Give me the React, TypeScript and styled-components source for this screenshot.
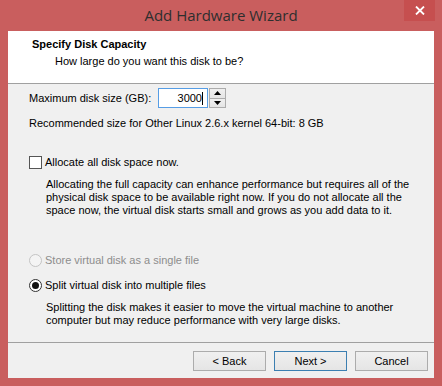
import React from "react";
import styled, { createGlobalStyle } from "styled-components";

const Global = createGlobalStyle`
  html, body { margin: 0; padding: 0; background: #c95e5e; }
  * { box-sizing: border-box; }
`;

const Window = styled.div`
  width: 442px;
  height: 386px;
  background: #c95e5e;
  padding: 0 8px 8px 8px;
  display: flex;
  flex-direction: column;
  font-family: "Liberation Sans", Arial, sans-serif;
  font-size: 11px;
  color: #000;
`;

const TitleBar = styled.div`
  height: 31px;
  display: grid;
  grid-template-columns: 1fr auto 1fr;
  align-items: start;
  margin: 0 -8px;
`;

const TitleText = styled.div`
  grid-column: 2;
  font-family: "Open Sans", "Noto Sans", sans-serif;
  font-size: 15px;
  line-height: 30px;
  color: #2e2e2e;
`;

const CloseButton = styled.div`
  grid-column: 3;
  justify-self: end;
  margin-right: 7px;
  width: 31px;
  height: 21px;
  background: #c64f4f;
  display: flex;
  align-items: center;
  justify-content: center;
`;

const Client = styled.div`
  flex: 1;
  background: #f0f0f0;
  display: flex;
  flex-direction: column;
`;

const Header = styled.div`
  height: 53px;
  background: #fff;
  border-bottom: 1px solid #a0a0a0;
  padding: 7px 0 0 24px;
`;

const HeaderTitle = styled.div`
  font-weight: bold;
  line-height: 13px;
`;

const HeaderSub = styled.div`
  margin: 4px 0 0 23px;
  line-height: 13px;
`;

const Body = styled.div`
  flex: 1;
  padding: 4px 0 0 21px;
  display: flex;
  flex-direction: column;
  line-height: 13px;
`;

const SizeRow = styled.div`
  display: flex;
  align-items: center;
  height: 20px;
`;

const SizeLabel = styled.div`
  width: 129px;
`;

const SizeInput = styled.div`
  width: 50px;
  height: 20px;
  border: 1px solid #569de5;
  background: #fff;
  display: flex;
  align-items: center;
  justify-content: flex-end;
  padding-right: 4px;
`;

const Caret = styled.span`
  display: inline-block;
  width: 1px;
  height: 13px;
  background: #000;
`;

const Spin = styled.div`
  display: flex;
  flex-direction: column;
  width: 17px;
  height: 20px;
  margin-left: 1px;
`;

const SpinButton = styled.div`
  flex: 1;
  border: 1px solid #acacac;
  background: linear-gradient(#f0f0f0, #e5e5e5);
  display: flex;
  align-items: center;
  justify-content: center;
  & + & { border-top: none; }
`;

const Text = styled.div<{ $top: number; $indent?: number; $disabled?: boolean }>`
  margin-top: ${(p) => p.$top}px;
  margin-left: ${(p) => p.$indent ?? 0}px;
  color: ${(p) => (p.$disabled ? "#8d8d8d" : "#000")};
  line-height: 13px;
`;

const OptionRow = styled.label<{ $top: number; $disabled?: boolean }>`
  display: flex;
  align-items: center;
  gap: 3px;
  margin-top: ${(p) => p.$top}px;
  color: ${(p) => (p.$disabled ? "#8d8d8d" : "#000")};
  line-height: 13px;
`;

const CheckBox = styled.span`
  width: 13px;
  height: 13px;
  border: 1px solid #555;
  background: #fff;
`;

const Radio = styled.span<{ $checked?: boolean; $disabled?: boolean }>`
  width: 13px;
  height: 13px;
  border-radius: 50%;
  border: 1px solid ${(p) => (p.$disabled ? "#c4c4c4" : "#333")};
  background: ${(p) => (p.$disabled ? "#f4f4f4" : "#fff")};
  display: flex;
  align-items: center;
  justify-content: center;
  &::after {
    content: "";
    display: ${(p) => (p.$checked ? "block" : "none")};
    width: 7px;
    height: 7px;
    border-radius: 50%;
    background: #111;
  }
`;

const Footer = styled.div`
  border-top: 1px solid #a0a0a0;
  height: 36px;
  display: flex;
  justify-content: flex-end;
  align-items: flex-start;
  gap: 8px;
  padding: 8px 6px 0 0;
`;

const Button = styled.div<{ $default?: boolean }>`
  width: 73px;
  height: 20px;
  border: 1px solid ${(p) => (p.$default ? "#3c7fb1" : "#acacac")};
  background: linear-gradient(#f0f0f0, #e5e5e5);
  display: flex;
  align-items: center;
  justify-content: center;
  line-height: 13px;
`;

export default function App() {
  return (
    <>
      <Global />
      <Window>
        <TitleBar>
          <TitleText>Add Hardware Wizard</TitleText>
          <CloseButton>
            <svg width="10" height="9" viewBox="0 0 10 9">
              <path d="M1 0.5 L9 8.5 M9 0.5 L1 8.5" stroke="#fff" strokeWidth="1.8" />
            </svg>
          </CloseButton>
        </TitleBar>
        <Client>
          <Header>
            <HeaderTitle>Specify Disk Capacity</HeaderTitle>
            <HeaderSub>How large do you want this disk to be?</HeaderSub>
          </Header>
          <Body>
            <SizeRow>
              <SizeLabel>Maximum disk size (GB):</SizeLabel>
              <SizeInput>
                3000
                <Caret />
              </SizeInput>
              <Spin>
                <SpinButton>
                  <svg width="7" height="4" viewBox="0 0 7 4">
                    <path d="M0 4 L3.5 0 L7 4 Z" fill="#000" />
                  </svg>
                </SpinButton>
                <SpinButton>
                  <svg width="7" height="4" viewBox="0 0 7 4">
                    <path d="M0 0 L3.5 4 L7 0 Z" fill="#000" />
                  </svg>
                </SpinButton>
              </Spin>
            </SizeRow>
            <Text $top={9}>Recommended size for Other Linux 2.6.x kernel 64-bit: 8 GB</Text>
            <OptionRow $top={26}>
              <CheckBox />
              Allocate all disk space now.
            </OptionRow>
            <Text $top={9} $indent={17}>
              Allocating the full capacity can enhance performance but requires all of the
              <br />
              physical disk space to be available right now. If you do not allocate all the
              <br />
              space now, the virtual disk starts small and grows as you add data to it.
            </Text>
            <OptionRow $top={37} $disabled>
              <Radio $disabled />
              Store virtual disk as a single file
            </OptionRow>
            <OptionRow $top={12}>
              <Radio $checked />
              Split virtual disk into multiple files
            </OptionRow>
            <Text $top={9} $indent={17}>
              Splitting the disk makes it easier to move the virtual machine to another
              <br />
              computer but may reduce performance with very large disks.
            </Text>
          </Body>
          <Footer>
            <Button>&lt; Back</Button>
            <Button $default>Next &gt;</Button>
            <Button>Cancel</Button>
          </Footer>
        </Client>
      </Window>
    </>
  );
}
